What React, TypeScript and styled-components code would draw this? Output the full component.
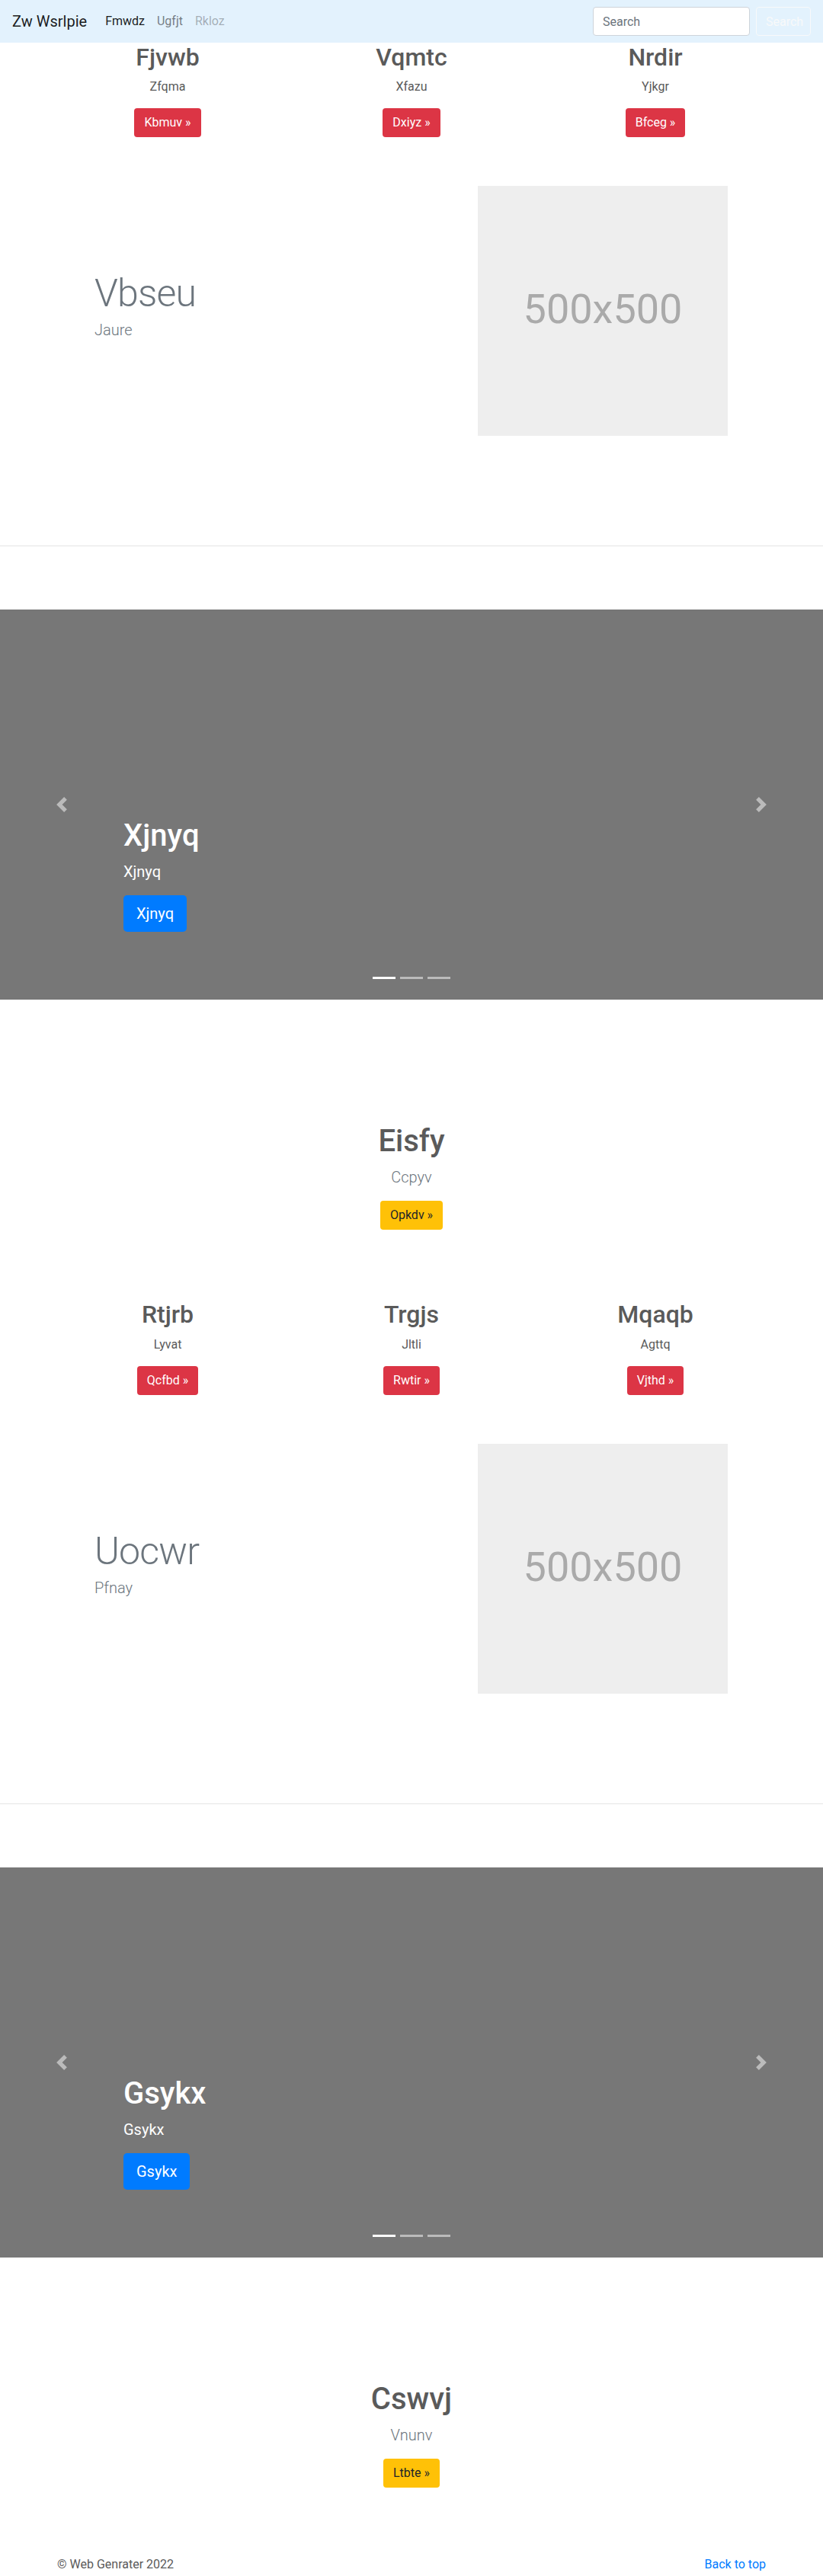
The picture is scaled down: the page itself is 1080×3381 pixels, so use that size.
import React from 'react';
import styled, { createGlobalStyle } from 'styled-components';

const GlobalStyle = createGlobalStyle`
  * {
    box-sizing: border-box;
  }

  body {
    margin: 0;
    font-family: Roboto, "Liberation Sans", sans-serif;
    font-size: 16px;
    line-height: 1.5;
    color: #5a5a5a;
    background: #fff;
  }
`;

type ColData = { title: string; text: string; action: string };
type BlockData = {
  cols: ColData[];
  feature: { title: string; lead: string };
  slide: string;
  hero: { title: string; lead: string; action: string };
};

const blocks: BlockData[] = [
  {
    cols: [
      { title: 'Fjvwb', text: 'Zfqma', action: 'Kbmuv' },
      { title: 'Vqmtc', text: 'Xfazu', action: 'Dxiyz' },
      { title: 'Nrdir', text: 'Yjkgr', action: 'Bfceg' },
    ],
    feature: { title: 'Vbseu', lead: 'Jaure' },
    slide: 'Xjnyq',
    hero: { title: 'Eisfy', lead: 'Ccpyv', action: 'Opkdv' },
  },
  {
    cols: [
      { title: 'Rtjrb', text: 'Lyvat', action: 'Qcfbd' },
      { title: 'Trgjs', text: 'Jltli', action: 'Rwtir' },
      { title: 'Mqaqb', text: 'Agttq', action: 'Vjthd' },
    ],
    feature: { title: 'Uocwr', lead: 'Pfnay' },
    slide: 'Gsykx',
    hero: { title: 'Cswvj', lead: 'Vnunv', action: 'Ltbte' },
  },
];

/* navbar */

const NavBar = styled.nav`
  display: flex;
  align-items: center;
  height: 56px;
  padding: 0 16px;
  background: #e3f2fd;
`;

const Brand = styled.a`
  margin-right: 16px;
  font-size: 20px;
  line-height: 30px;
  color: rgba(0, 0, 0, 0.9);
  text-decoration: none;
`;

const NavList = styled.div`
  display: flex;
  flex: 1;
`;

const NavLink = styled.a<{ $state: 'active' | 'idle' | 'disabled' }>`
  padding: 8px;
  color: ${(p) =>
    p.$state === 'active'
      ? 'rgba(0, 0, 0, 0.9)'
      : p.$state === 'idle'
      ? 'rgba(0, 0, 0, 0.5)'
      : 'rgba(0, 0, 0, 0.3)'};
  text-decoration: none;
`;

const SearchForm = styled.form`
  display: flex;
  gap: 8px;
`;

const SearchInput = styled.input`
  width: 206px;
  height: 38px;
  padding: 6px 12px;
  font-family: inherit;
  font-size: 16px;
  color: #495057;
  background: #fff;
  border: 1px solid #ced4da;
  border-radius: 4px;

  &::placeholder {
    color: #6c757d;
  }
`;

const OutlineLight = styled.button`
  width: 72px;
  height: 38px;
  padding: 6px 12px;
  font-family: inherit;
  font-size: 16px;
  color: #f8f9fa;
  background: transparent;
  border: 1px solid #f8f9fa;
  border-radius: 4px;
`;

/* shared */

const Container = styled.div`
  width: 960px;
  margin: 0 auto;
`;

const ButtonRow = styled.div<{ $align?: 'left' | 'center'; $gap?: number }>`
  display: flex;
  justify-content: ${(p) => (p.$align === 'left' ? 'flex-start' : 'center')};
  margin-bottom: ${(p) => p.$gap ?? 0}px;
`;

const palette = {
  danger: { bg: '#dc3545', fg: '#fff' },
  warning: { bg: '#ffc107', fg: '#212529' },
  primary: { bg: '#007bff', fg: '#fff' },
};

const Button = styled.a<{ $variant: keyof typeof palette; $large?: boolean }>`
  display: inline-block;
  padding: ${(p) => (p.$large ? '8px 16px' : '6px 12px')};
  font-size: ${(p) => (p.$large ? 20 : 16)}px;
  line-height: ${(p) => (p.$large ? 30 : 24)}px;
  border: 1px solid transparent;
  border-radius: ${(p) => (p.$large ? 4.8 : 4)}px;
  background: ${(p) => palette[p.$variant].bg};
  color: ${(p) => palette[p.$variant].fg};
  text-decoration: none;
`;

/* marketing columns */

const MarketingRow = styled(Container)`
  display: grid;
  grid-template-columns: repeat(3, 1fr);
`;

const MarketingCol = styled.div`
  padding: 0 15px;
  text-align: center;
`;

const ColTitle = styled.h2`
  margin: 0 0 8px;
  font-size: 32px;
  font-weight: 500;
  line-height: 38.4px;
  color: #5a5a5a;
`;

const ColText = styled.p`
  margin: 0 0 16px;
`;

/* featurette */

const Featurette = styled(Container)`
  display: grid;
  grid-template-columns: 567px 328px;
  align-items: center;
  margin-top: 48px;
`;

const FeatureText = styled.div`
  padding: 8px 0 0 64px;
`;

const FeatureHeading = styled.h2`
  margin: 0 0 8px;
  font-size: 50px;
  font-weight: 300;
  line-height: 1;
  letter-spacing: -0.8px;
  color: #6c757d;
`;

const Lead = styled.p<{ $gap?: number }>`
  margin: 0 0 ${(p) => p.$gap ?? 16}px;
  font-size: 20px;
  font-weight: 300;
  line-height: 30px;
  color: #6c757d;
`;

const Placeholder = styled.svg`
  display: block;
  font-family: Roboto, "Liberation Sans", sans-serif;
  font-size: 54px;
  text-anchor: middle;
`;

const Divider = styled.hr`
  margin: 144px 0 83px;
  border: 0;
  border-top: 1px solid rgba(0, 0, 0, 0.1);
`;

/* carousel */

const Carousel = styled.div`
  position: relative;
  height: 512px;
  background: #777;
  overflow: hidden;
`;

const Control = styled.span<{ $side: 'left' | 'right' }>`
  position: absolute;
  top: 0;
  bottom: 0;
  ${(p) => p.$side}: 0;
  width: 15%;
  display: flex;
  align-items: center;
  justify-content: center;
  opacity: 0.5;
`;

const Caption = styled.div`
  position: absolute;
  left: 15%;
  right: 15%;
  bottom: 89px;
  color: #fff;
`;

const CaptionTitle = styled.h1`
  margin: 0 0 8px;
  font-size: 40px;
  font-weight: 500;
  line-height: 48px;
`;

const CaptionText = styled.p`
  margin: 0 0 16px;
  font-size: 20px;
  line-height: 30px;
`;

const Indicators = styled.div`
  position: absolute;
  left: 0;
  right: 0;
  bottom: 27px;
  display: flex;
  justify-content: center;
  gap: 6px;
`;

const Indicator = styled.span<{ $active?: boolean }>`
  width: 30px;
  height: 3px;
  background: ${(p) => (p.$active ? '#fff' : 'rgba(255, 255, 255, 0.5)')};
`;

/* centred hero */

const Hero = styled.section`
  padding: 162px 0 92px;
  text-align: center;
`;

const HeroTitle = styled.h1`
  margin: 0 0 8px;
  font-size: 40px;
  font-weight: 500;
  line-height: 48px;
  color: #5a5a5a;
`;

/* footer */

const Footer = styled(Container)`
  display: flex;
  justify-content: space-between;
  padding: 0 15px;
  line-height: 18px;
`;

const FooterLink = styled.a`
  color: #007bff;
  text-decoration: none;
`;

const Chevron = ({ dir }: { dir: 'prev' | 'next' }) => (
  <svg width="20" height="20" viewBox="0 0 8 8" fill="#fff">
    <path
      d={
        dir === 'prev'
          ? 'M5.25 0l-4 4 4 4 1.5-1.5L4.25 4l2.5-2.5L5.25 0z'
          : 'M2.75 0l-1.5 1.5L3.75 4l-2.5 2.5L2.75 8l4-4-4-4z'
      }
    />
  </svg>
);

const Block = ({ data }: { data: BlockData }) => (
  <>
    <MarketingRow>
      {data.cols.map((c) => (
        <MarketingCol key={c.title}>
          <ColTitle>{c.title}</ColTitle>
          <ColText>{c.text}</ColText>
          <ButtonRow $gap={16}>
            <Button $variant="danger" href="#">
              {c.action} »
            </Button>
          </ButtonRow>
        </MarketingCol>
      ))}
    </MarketingRow>

    <Featurette>
      <FeatureText>
        <FeatureHeading>{data.feature.title}</FeatureHeading>
        <Lead>{data.feature.lead}</Lead>
      </FeatureText>
      <Placeholder width="328" height="328" viewBox="0 0 328 328">
        <rect width="100%" height="100%" fill="#eee" />
        <text x="50%" y="50%" dy=".3em" fill="#aaa">
          500x500
        </text>
      </Placeholder>
    </Featurette>

    <Divider />

    <Carousel>
      <Control $side="left">
        <Chevron dir="prev" />
      </Control>
      <Control $side="right">
        <Chevron dir="next" />
      </Control>
      <Caption>
        <CaptionTitle>{data.slide}</CaptionTitle>
        <CaptionText>{data.slide}</CaptionText>
        <ButtonRow $align="left">
          <Button $variant="primary" $large href="#">
            {data.slide}
          </Button>
        </ButtonRow>
      </Caption>
      <Indicators>
        <Indicator $active />
        <Indicator />
        <Indicator />
      </Indicators>
    </Carousel>

    <Hero>
      <HeroTitle>{data.hero.title}</HeroTitle>
      <Lead>{data.hero.lead}</Lead>
      <ButtonRow>
        <Button $variant="warning" href="#">
          {data.hero.action} »
        </Button>
      </ButtonRow>
    </Hero>
  </>
);

const App = () => (
  <>
    <GlobalStyle />
    <NavBar>
      <Brand href="#">Zw Wsrlpie</Brand>
      <NavList>
        <NavLink $state="active" href="#">Fmwdz</NavLink>
        <NavLink $state="idle" href="#">Ugfjt</NavLink>
        <NavLink $state="disabled" href="#">Rkloz</NavLink>
      </NavList>
      <SearchForm onSubmit={(e) => e.preventDefault()}>
        <SearchInput type="search" placeholder="Search" />
        <OutlineLight type="submit">Search</OutlineLight>
      </SearchForm>
    </NavBar>

    {blocks.map((b) => (
      <Block key={b.slide} data={b} />
    ))}

    <Footer as="footer">
      <span>© Web Genrater 2022</span>
      <FooterLink href="#">Back to top</FooterLink>
    </Footer>
  </>
);

export default App;
